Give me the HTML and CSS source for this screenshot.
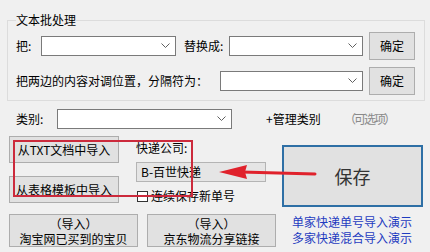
FILE: index.html
```html
<!DOCTYPE html>
<html lang="zh">
<head>
<meta charset="utf-8">
<link rel="stylesheet" href="styles.css">
</head>
<body>
<fieldset class="group">
  <legend class="legend">文本批处理</legend>
  <div class="row">
    <span class="lbl w25">把:</span>
    <div class="combo w135"><svg class="chev" width="9" height="6" viewBox="0 0 9 6"><polyline points="0.5,0.5 4.5,4.5 8.5,0.5" fill="none" stroke="#606060" stroke-width="1"/></svg></div>
    <span class="lbl w45 ml8">替换成:</span>
    <div class="combo w134"><svg class="chev" width="9" height="6" viewBox="0 0 9 6"><polyline points="0.5,0.5 4.5,4.5 8.5,0.5" fill="none" stroke="#606060" stroke-width="1"/></svg></div>
    <button class="btn ok">确定</button>
  </div>
  <div class="row row2">
    <span class="lbl w204">把两边的内容对调位置，分隔符为：</span>
    <div class="combo w143"><svg class="chev" width="9" height="6" viewBox="0 0 9 6"><polyline points="0.5,0.5 4.5,4.5 8.5,0.5" fill="none" stroke="#606060" stroke-width="1"/></svg></div>
    <button class="btn ok">确定</button>
  </div>
</fieldset>

<div class="cat">
  <span class="lbl w41">类别:</span>
  <div class="combo w175"><svg class="chev" width="9" height="6" viewBox="0 0 9 6"><polyline points="0.5,0.5 4.5,4.5 8.5,0.5" fill="none" stroke="#606060" stroke-width="1"/></svg></div>
  <span class="manage">+管理类别</span>
  <span class="opt">（可选项）</span>
</div>

<div class="mid">
  <div class="col-left">
    <button class="btn imp">从TXT文档中导入</button>
    <button class="btn imp">从表格模板中导入</button>
  </div>
  <div class="col-mid">
    <div class="lbl company">快递公司:</div>
    <div class="select">B-百世快递</div>
    <div class="check"><span class="box"></span><span>连续保存新单号</span></div>
  </div>
  <button class="btn save">保存</button>
</div>

<div class="bottom">
  <button class="btn two"><span class="ln">（导入）</span><span class="ln">淘宝网已买到的宝贝</span></button>
  <button class="btn two"><span class="ln">（导入）</span><span class="ln">京东物流分享链接</span></button>
  <div class="links">
    <a class="link">单家快递单号导入演示</a>
    <a class="link">多家快递混合导入演示</a>
  </div>
</div>

<div class="redbox"></div>
<svg class="arrow" width="110" height="20" viewBox="0 0 110 20">
  <line x1="22" y1="9" x2="96" y2="11" stroke="#e0222c" stroke-width="3" stroke-linecap="round"/>
  <polygon points="0,9 28,2 26,9 28,16" fill="#e0222c"/>
</svg>
</body>
</html>
```

FILE: styles.css
```css
html, body {
  margin: 0;
  background: #f0f0f0;
}
body {
  width: 430px;
  height: 252px;
  padding-top: 12px;
  box-sizing: border-box;
  font-family: "Noto Sans CJK SC", "Noto Sans", sans-serif;
  font-size: 12px;
  line-height: 16px;
  color: #000;
  overflow: hidden;
}
.group {
  margin: 0 0 0 7px;
  width: 418px;
  box-sizing: border-box;
  border: 1px solid #dcdcdc;
  padding: 4px 0 5px 8px;
  min-width: 0;
}
.legend {
  padding: 0;
  margin: 0;
  line-height: 16px;
  color: #000;
}
.row {
  display: flex;
  align-items: center;
  height: 28px;
}
.row2 { margin-top: 7px; }
.lbl { white-space: nowrap; }
.w25 { width: 25px; }
.w41 { width: 41px; }
.w45 { width: 45px; }
.w204 { width: 204px; }
.ml8 { margin-left: 8px; }
.combo {
  height: 20px;
  box-sizing: border-box;
  border: 1px solid #7a7a7a;
  background: #fff;
  display: flex;
  align-items: center;
  justify-content: flex-end;
  padding-right: 5px;
}
.w134 { width: 134px; }
.w135 { width: 135px; }
.w143 { width: 143px; }
.w175 { width: 175px; }
.chev { display: block; }
.btn {
  font-family: inherit;
  font-size: 12px;
  line-height: 16px;
  color: #000;
  background: #e1e1e1;
  border: 1px solid #adadad;
  padding: 0;
  margin: 0;
  box-sizing: border-box;
}
.ok {
  width: 46px;
  height: 28px;
  margin-left: 6px;
}
.cat {
  display: flex;
  align-items: center;
  height: 20px;
  margin-top: 8px;
  padding-left: 16px;
}
.manage {
  width: 78px;
  margin-left: 34px;
  white-space: nowrap;
}
.opt {
  color: #8a8a8a;
  letter-spacing: -2px;
  white-space: nowrap;
}
.mid {
  display: flex;
  margin-top: 7px;
  padding-left: 9px;
  height: 71px;
}
.col-left {
  display: flex;
  flex-direction: column;
  gap: 13px;
  width: 110px;
}
.imp {
  width: 110px;
  height: 27px;
}
.col-mid {
  width: 130px;
  margin-left: 17px;
  display: flex;
  flex-direction: column;
}
.company { margin-top: 4px; }
.select {
  margin-top: 6px;
  height: 20px;
  box-sizing: border-box;
  border: 1px solid #b4b4b4;
  background: #e5e5e5;
  padding-left: 4px;
  line-height: 18px;
  white-space: nowrap;
}
.check {
  margin-top: 6px;
  display: flex;
  align-items: center;
  gap: 3px;
  white-space: nowrap;
  padding-left: 1px;
}
.box {
  width: 11px;
  height: 11px;
  border: 1px solid #333;
  background: #fff;
  box-sizing: border-box;
}
.save {
  width: 141px;
  height: 62px;
  margin-left: 16px;
  margin-top: 9px;
  border: 2px solid #2e6fa5;
  font-size: 18px;
  line-height: 24px;
  color: #333;
}
.bottom {
  display: flex;
  margin-top: 7px;
  padding-left: 9px;
  height: 33px;
}
.two {
  width: 129px;
  height: 33px;
  display: flex;
  flex-direction: column;
  align-items: center;
  justify-content: center;
  font-size: 12px;
}
.ln {
  display: block;
  line-height: 15px;
  height: 15px;
}
.two + .two { margin-left: 9px; }
.links {
  margin-left: 16px;
  display: flex;
  flex-direction: column;
}
.link {
  color: #1f3cc0;
  line-height: 16px;
  white-space: nowrap;
}
.redbox {
  position: absolute;
  left: 13px;
  top: 140px;
  width: 180px;
  height: 57px;
  box-sizing: border-box;
  border: 2px solid #cc2a3c;
}
.arrow {
  position: absolute;
  left: 219px;
  top: 163px;
}
```
